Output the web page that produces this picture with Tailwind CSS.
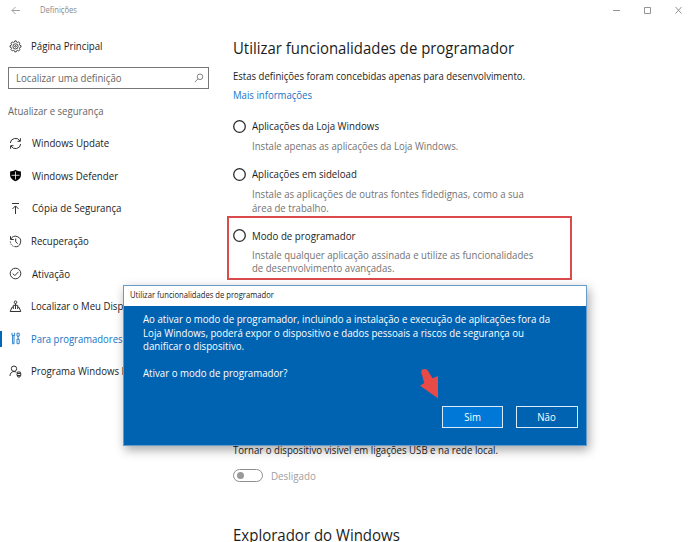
<!DOCTYPE html>
<html lang="pt">
<head>
<meta charset="utf-8">
<title>Definições</title>
<script src="https://cdn.jsdelivr.net/npm/@tailwindcss/browser@4"></script>
</head>
<body class="relative h-[542px] w-[693px] overflow-hidden bg-white font-['Open_Sans',sans-serif] text-[11px] leading-[14px] whitespace-nowrap text-[#1c1c1c]">
<header class="flex h-5 items-center pl-[11px] text-[8.6px] text-[#8a8a8a]">
  <svg class="h-[9px] w-[10px]" viewBox="0 0 10 9" fill="none" stroke="#888" stroke-width=".8"><path d="M9 4.500H1M4.500 1 1 4.500 4.500 8"/></svg>
  <span class="ml-[19px] inline-block origin-left scale-x-[.885]">Definições</span>
  <div class="ml-auto flex items-center pr-[11px]">
    <svg class="h-2 w-[70px]" viewBox="0 0 70 8" fill="none" stroke="#888" stroke-width=".9"><path d="M1 4.500h7M32.500 1.500h6v6h-6zM63.500 1l6 6.500M69.500 1l-6 6.500"/></svg>
  </div>
</header>
<div class="flex h-[522px]">
  <aside class="w-[233px] shrink-0">
    <div class="mt-[19px] flex h-[14px] items-center pl-[9px]">
      <svg class="h-[13px] w-[13px]" viewBox="0 0 13 13" fill="none" stroke="#333" stroke-width=".9"><path d="M5.500 2 5.800.900h1.400L7.500 2l1.200.5 1-.6 1.300 1.300-.6 1 .5 1.200 1.100.3v1.400l-1.100.3-.5 1.200.6 1-1.300 1.300-1-.6-1.200.5-.3 1.100H5.800l-.3-1.100-1.200-.5-1 .6L2 9.600l.6-1-.5-1.200L1 7.100V5.700l1.100-.3.500-1.200-.6-1 1.300-1.300 1 .6z"/><circle cx="6.500" cy="6.400" r="2.600"/><circle cx="6.500" cy="6.400" r=".8"/></svg>
      <span class="ml-[9px] inline-block origin-left scale-x-[.878]">Página Principal</span>
    </div>
    <div class="mt-[14px] ml-[8px] flex h-[22px] w-[201px] items-center justify-between border border-[#777] pr-[4px] pl-[7px] text-[#666]">
      <span class="inline-block origin-left scale-x-[.874]">Localizar uma definição</span>
      <svg class="h-[10px] w-[10px]" viewBox="0 0 10 10" fill="none" stroke="#777" stroke-width=".9"><circle cx="6" cy="3.800" r="2.800"/><path d="M4 5.800.8 9.200"/></svg>
    </div>
    <div class="mt-[15px] pl-[8px] text-[#666]"><span class="inline-block origin-left scale-x-[.87]">Atualizar e segurança</span></div>
    <nav class="mt-[9px]">
      <div class="flex h-[32.6px] items-center pl-[9px]">
        <svg class="h-[13px] w-[13px]" viewBox="0 0 13 13" fill="none" stroke="#333" stroke-width="1"><path d="M1.300 6A5.200 5.200 0 0 1 11 4M11.700 7A5.200 5.200 0 0 1 2 9M11.400 1.200v3.100H8.500M1.600 11.800V8.700h2.900"/></svg>
        <span class="ml-[10px] inline-block origin-left scale-x-[.884]">Windows Update</span>
      </div>
      <div class="flex h-[32.6px] items-center pl-[9px]">
        <svg class="h-[13px] w-[13px]" viewBox="0 0 13 13"><path d="M6.500.8C5 2 3 2.500 1.100 2.500v4c0 2.600 2.300 4.500 5.400 5.700 3.100-1.200 5.400-3.100 5.400-5.700v-4C10 2.500 8 2 6.500.800z" fill="#000"/><path d="M6.500 2.500v8M2.500 6.300h8" stroke="#fff" stroke-width=".8"/></svg>
        <span class="ml-[10px] inline-block origin-left scale-x-[.88]">Windows Defender</span>
      </div>
      <div class="flex h-[32.6px] items-center pl-[9px]">
        <svg class="h-[13px] w-[13px]" viewBox="0 0 13 13" fill="none" stroke="#333" stroke-width="1"><path d="M3 1.500h7M6.500 12V4M3.500 6.900l3-3 3 3"/></svg>
        <span class="ml-[10px] inline-block origin-left scale-x-[.882]">Cópia de Segurança</span>
      </div>
      <div class="flex h-[32.6px] items-center pl-[9px]">
        <svg class="h-[13px] w-[13px]" viewBox="0 0 13 13" fill="none" stroke="#333" stroke-width="1"><path d="M1.500 1.200v3.300h3.300M1.800 4.200A5.200 5.200 0 1 1 5.500 11.600M6.700 3.500v3.300l2 1.800"/><path d="M1.300 6.500a5.200 5.200 0 0 0 4.200 5.100" stroke-dasharray="1.300 1"/></svg>
        <span class="ml-[9px] inline-block origin-left scale-x-[.87]">Recuperação</span>
      </div>
      <div class="flex h-[32.6px] items-center pl-[9px]">
        <svg class="h-[13px] w-[13px]" viewBox="0 0 13 13" fill="none" stroke="#333" stroke-width="1"><circle cx="6.500" cy="6.500" r="5.300"/><path d="m3.800 6.600 2 2 3.700-3.800"/></svg>
        <span class="ml-[10px] inline-block origin-left scale-x-[.88]">Ativação</span>
      </div>
      <div class="flex h-[32.6px] items-center pl-[9px]">
        <svg class="h-[13px] w-[13px]" viewBox="0 0 13 13" fill="none" stroke="#333" stroke-width="1"><circle cx="6.500" cy="2.300" r="1.300"/><path d="M6.500 3.600V9M4.300 9V5.300h4.400V9M4 7.200H3L1.200 11.500h10.600L10 7.200H9"/></svg>
        <span class="ml-[9px] inline-block origin-left scale-x-[.872]">Localizar o Meu Disp</span>
      </div>
      <div class="flex h-[32.6px] items-center text-[#1674c4]">
        <span class="h-4 w-[2px] bg-[#0067b8]"></span>
        <svg class="ml-[7px] h-[13px] w-[13px]" viewBox="0 0 13 13" fill="none" stroke="#1674c4" stroke-width=".9"><path d="M3 .8v2.600h2.600V.8M3.600 3.400v8.400H5V3.400M8 1.200h2.200v3H8zM9.100 4.200v3M8 7.200h2.200v4.500H8z"/></svg>
        <span class="ml-[9px] inline-block origin-left scale-x-[.862]">Para programadores</span>
      </div>
      <div class="flex h-[32.6px] items-center pl-[9px]">
        <svg class="h-[13px] w-[13px]" viewBox="0 0 13 13" fill="none" stroke="#333" stroke-width="1"><circle cx="5" cy="3.700" r="2.700"/><path d="M1 11c0-2.800 1.800-4.500 4-4.500 1 0 1.700.3 2.300.8M8.300 8.300V7h3v1.300M8 8.500h3.800v2H8zM8.800 10.500v1.500h2.200v-1.500"/></svg>
        <span class="ml-[9px] inline-block origin-left scale-x-[.878]">Programa Windows I</span>
      </div>
    </nav>
  </aside>
  <main class="w-[350px] shrink-0">
    <h1 class="mt-[17px] h-[22px] text-[16px] leading-[22px]"><span class="inline-block origin-left scale-x-[.932]">Utilizar funcionalidades de programador</span></h1>
    <p class="mt-[10px]"><span class="inline-block origin-left scale-x-[.869]">Estas definições foram concebidas apenas para desenvolvimento.</span></p>
    <p class="mt-[5px] text-[#1674c4]"><span class="inline-block origin-left scale-x-[.87]">Mais informações</span></p>
    <div class="mt-[17px] flex items-center gap-[6px]"><svg class="size-[13px]" viewBox="0 0 13 13" fill="none" stroke="#2b2b2b" stroke-width="1.300"><circle cx="6.500" cy="6.500" r="5.800"/></svg><span class="inline-block origin-left scale-x-[.886]">Aplicações da Loja Windows</span></div>
    <p class="mt-[6px] pl-[19px] text-[#737373]"><span class="inline-block origin-left scale-x-[.872]">Instale apenas as aplicações da Loja Windows.</span></p>
    <div class="mt-[14px] flex items-center gap-[6px]"><svg class="size-[13px]" viewBox="0 0 13 13" fill="none" stroke="#2b2b2b" stroke-width="1.300"><circle cx="6.500" cy="6.500" r="5.800"/></svg><span class="inline-block origin-left scale-x-[.88]">Aplicações em sideload</span></div>
    <p class="mt-[6px] ml-[19px] origin-left scale-x-[.873] leading-[13.6px] text-[#737373]">Instale as aplicações de outras fontes fidedignas, como a sua<br>área de trabalho.</p>
    <section class="mt-[1.600px] -ml-[6px] h-[64px] w-[345px] border-2 border-[#dc4b4b] pt-[11px] pl-1">
      <div class="flex items-center gap-[6px]"><svg class="size-[13px]" viewBox="0 0 13 13" fill="none" stroke="#2b2b2b" stroke-width="1.300"><circle cx="6.500" cy="6.500" r="5.800"/></svg><span class="inline-block origin-left scale-x-[.884]">Modo de programador</span></div>
      <p class="mt-[5px] ml-[19px] origin-left scale-x-[.872] leading-[13.6px] text-[#737373]">Instale qualquer aplicação assinada e utilize as funcionalidades<br>de desenvolvimento avançadas.</p>
    </section>
    <p class="mt-[163px]"><span class="inline-block origin-left scale-x-[.875]">Tornar o dispositivo visível em ligações USB e na rede local.</span></p>
    <div class="mt-[12px] flex items-center gap-2 text-[#a0a0a0]"><i class="flex h-[13px] w-[30px] items-center rounded-full border border-[#8f8f8f] pl-[3px]"><b class="size-[7px] rounded-full bg-[#999]"></b></i><span class="inline-block origin-left scale-x-[.89]">Desligado</span></div>
    <h2 class="mt-[41px] text-[16px] leading-[22px]"><span class="inline-block origin-left scale-x-[.938]">Explorador do Windows</span></h2>
  </main>
</div>
<div role="dialog" class="absolute top-[285px] left-[123px] h-[161px] w-[464px] border border-[#659ccb] bg-[#0063b1] text-white shadow-[2px_4px_10px_rgba(0,0,0,.35)]">
  <div class="h-5 bg-white pl-[6px] text-[8.6px] leading-[19px] text-[#222]"><span class="inline-block origin-left scale-x-[.888]">Utilizar funcionalidades de programador</span></div>
  <div class="mt-[6px] ml-[19px] origin-left scale-x-[.88] leading-[13.6px]">Ao ativar o modo de programador, incluindo a instalação e execução de aplicações fora da<br>Loja Windows, poderá expor o dispositivo e dados pessoais a riscos de segurança ou<br>danificar o dispositivo.<br><br>Ativar o modo de programador?</div>
  <div class="mt-[26px] flex justify-end gap-[13px] pr-[8px]">
    <button class="h-[22px] w-[61px] border border-[#d8ecfc] bg-[#0078d7]"><span class="inline-block scale-x-[.88]">Sim</span></button>
    <button class="h-[22px] w-[62px] border border-[#d8ecfc]"><span class="inline-block scale-x-[.88]">Não</span></button>
  </div>
</div>
<svg class="absolute top-[366px] left-[416px] h-[36px] w-[26px]" viewBox="0 0 26 36"><path d="M5.400 7C4.500 2.500 10 1.800 11.700 4.500L16.500 12.200 22 10V32.300L4 19.700 8.300 17z" fill="#e84b47"/></svg>
</body>
</html>
